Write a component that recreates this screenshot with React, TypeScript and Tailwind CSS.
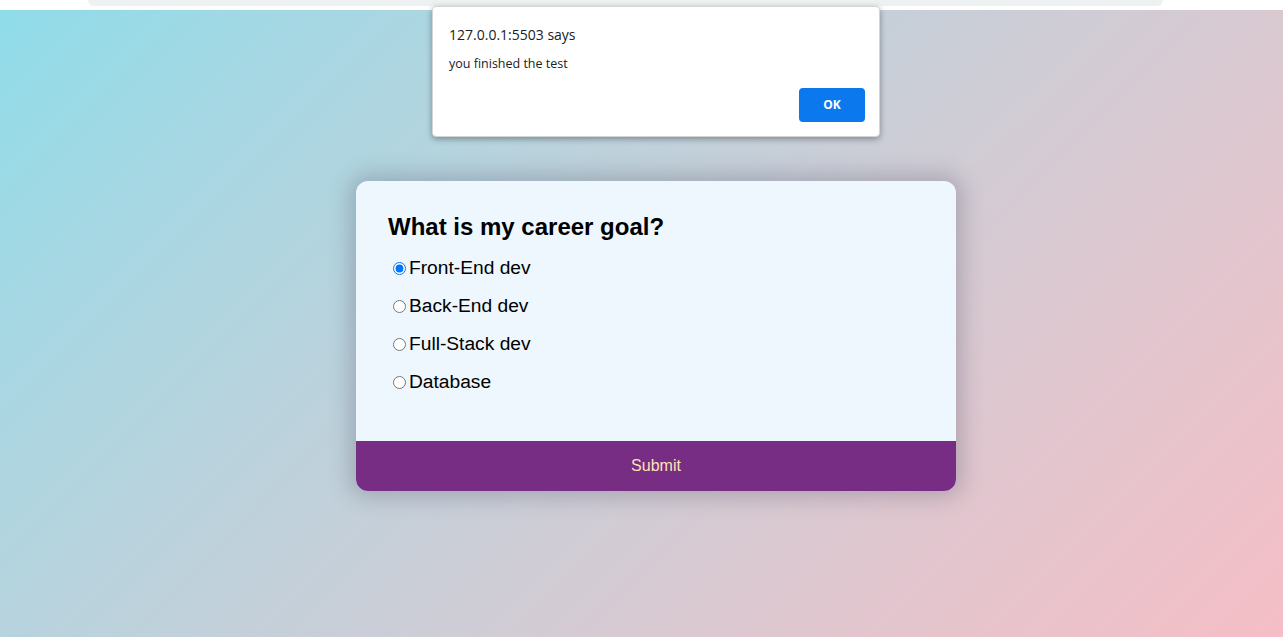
import React, { useState } from 'react';

const options = ['Front-End dev', 'Back-End dev', 'Full-Stack dev', 'Database'];

const AlertBox = () => (
  <div className="absolute left-[432px] top-[6px] w-[448px] h-[131px] bg-white rounded-[4px] border border-[#d4d4d4] shadow-[0_2px_6px_rgba(0,0,0,0.35)] pl-4 pr-[14px] pt-[18px] font-['Open_Sans',sans-serif]">
    <div className="text-[14px] leading-5 text-[#202124]">127.0.0.1:5503 says</div>
    <div className="mt-[9px] text-[12.5px] leading-5 text-[#202124]">you finished the test</div>
    <div className="flex justify-end mt-[14px]">
      <button className="w-[66px] h-[34px] rounded-[4px] bg-[#0b78ee] text-white text-[12px] font-bold">OK</button>
    </div>
  </div>
);

export default function App() {
  const [picked, setPicked] = useState(0);

  return (
    <div className="relative h-[637px] overflow-hidden flex flex-col font-['Liberation_Sans',Arial,sans-serif]">
      <div className="h-[10px] bg-white shrink-0 flex">
        <div className="ml-[88px] w-[1075px] h-[6px] bg-[#eef1f2] rounded-b-[8px]" />
      </div>
      <div className="flex-1 bg-linear-135 from-[#8fdce9] to-[#f5bec6] pt-[171px] pl-[356px]">
        <div className="w-[600px] bg-[#edf7fd] rounded-[12px] overflow-hidden shadow-[0_0_22px_6px_rgba(70,70,90,0.28)]">
          <div className="px-8 pt-8 pb-12">
            <h2 className="text-[24px] leading-7 font-bold text-black">What is my career goal?</h2>
            <ul>
              {options.map((o, i) => (
                <li key={o} className="mt-4 text-[19.2px] leading-[22px] flex items-center">
                  <input
                    type="radio"
                    name="answer"
                    id={'a' + i}
                    checked={picked === i}
                    onChange={() => setPicked(i)}
                    className="ml-[5px] mr-[3px] w-[13px] h-[13px] accent-[#0075ff]"
                  />
                  <label htmlFor={'a' + i} className="text-black">{o}</label>
                </li>
              ))}
            </ul>
          </div>
          <button className="block w-full h-[50px] bg-[#772d83] text-[#fde3b3] text-[16px]">Submit</button>
        </div>
      </div>
      <AlertBox />
    </div>
  );
}
